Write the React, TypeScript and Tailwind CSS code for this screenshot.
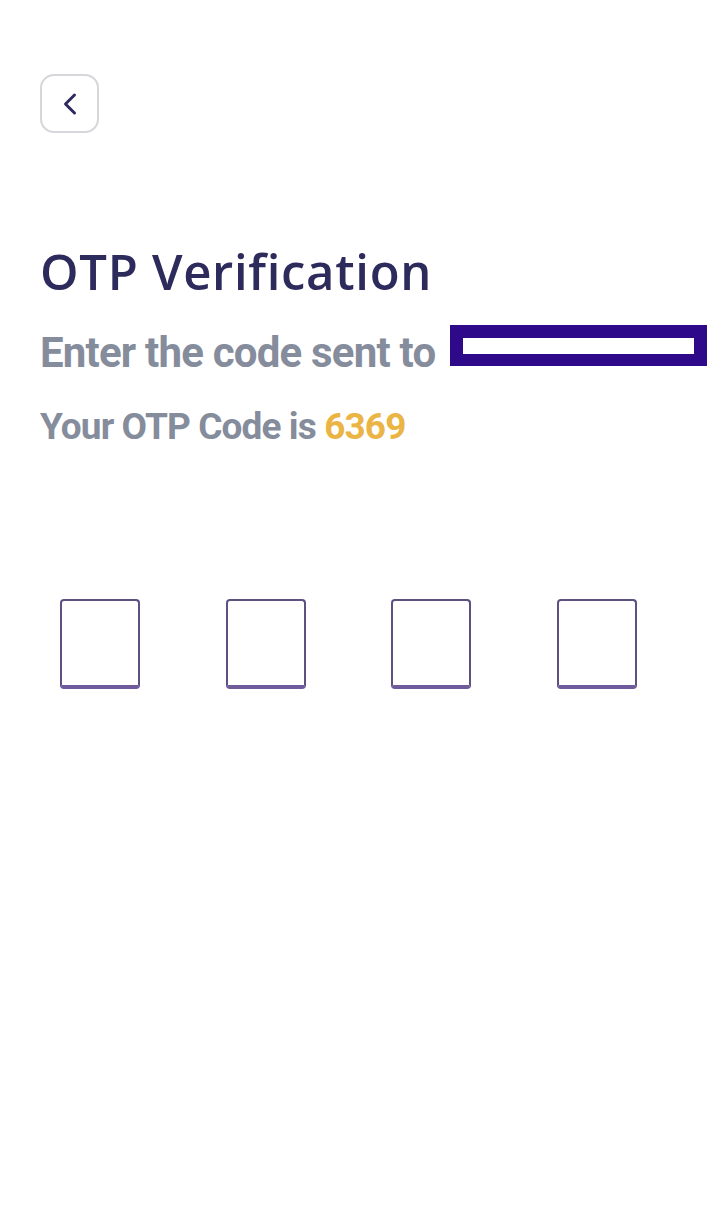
import { ChevronLeft } from "lucide-react";

const OtpBox = () => (
  <div className="w-[80px] h-[90px] rounded-[4px] border-2 border-b-4 border-[#5e5080] border-b-[#6f5a9c] bg-white"></div>
);

export default function App() {
  return (
    <div className="min-h-[1231px] w-[720px] bg-white px-10 pt-[74px]">
      {/* back */}
      <button className="flex h-[59px] w-[59px] items-center justify-center rounded-[14px] border-2 border-[#d6d6db] bg-white">
        <ChevronLeft className="h-9 w-9 text-[#2f2a5e]" strokeWidth={2} />
      </button>

      {/* heading */}
      <h1 className="mt-[106px] font-['Open_Sans',sans-serif] text-[49px] font-semibold leading-[64px] tracking-[0.7px] text-[#2d2a5c]">
        OTP Verification
      </h1>

      <div className="mt-[26px] flex items-start gap-[15px]">
        <p className="shrink-0 whitespace-nowrap font-['Roboto',sans-serif] text-[42px] font-bold leading-[48px] tracking-[-0.8px] text-[#858c9c]">
          Enter the code sent to
        </p>
        <div className="-mt-1 h-[41px] w-[257px] shrink-0 border-[13px] border-b-[12px] border-[#2e0a8a] bg-white"></div>
      </div>

      <p className="mt-[28px] whitespace-nowrap font-['Roboto',sans-serif] text-[37px] font-bold leading-[44px] tracking-[-0.9px] text-[#858c9c]">
        Your OTP Code is <span className="text-[#ebb546]">6369</span>
      </p>

      {/* code inputs */}
      <div className="mt-[150px] flex gap-[85.5px] pl-5">
        <OtpBox />
        <OtpBox />
        <OtpBox />
        <OtpBox />
      </div>
    </div>
  );
}
